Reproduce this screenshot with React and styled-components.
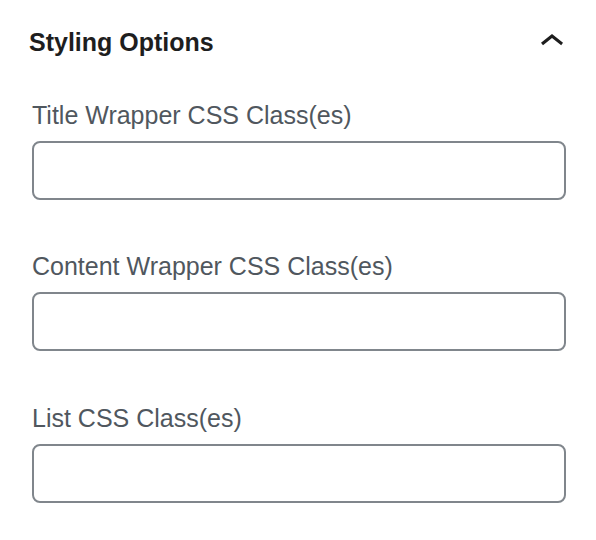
import React from 'react';
import styled, { createGlobalStyle } from 'styled-components';

const GlobalStyle = createGlobalStyle`
    body {
        margin: 0;
        background: #fff;
        font-family: "Liberation Sans", Arial, sans-serif;
    }
`

const Panel = styled.div`
    width: 596px;
    height: 540px;
    padding: 0 30px 0 32px;
    box-sizing: border-box;
    background: #fff;
`

const Header = styled.div`
    height: 84px;
    display: flex;
    align-items: center;
    justify-content: space-between;
    h2 {
        margin: 0 0 0 -3px;
        font-size: 25px;
        line-height: 30px;
        font-weight: 700;
        color: #1e1e1e;
    }
    svg {
        margin-right: -10px;
    }
`

const Field = styled.div`
    margin-top: ${p => p.$gap}px;
    label {
        display: block;
        font-size: 25px;
        line-height: 30px;
        color: #50575e;
        margin-bottom: 11px;
    }
`

const Input = styled.input`
    display: block;
    width: 100%;
    height: 59px;
    box-sizing: border-box;
    border: 2px solid #80868c;
    border-radius: 8px;
    background: #fff;
    outline: none;
    font-size: 25px;
    padding: 0 16px;
`

const fields = [
    { label: 'Title Wrapper CSS Class(es)', gap: 16 },
    { label: 'Content Wrapper CSS Class(es)', gap: 51 },
    { label: 'List CSS Class(es)', gap: 52 },
];

const App = () => {
    return(
        <>
            <GlobalStyle />
            <Panel>
                <Header>
                    <h2>Styling Options</h2>
                    <svg width="48" height="48" viewBox="0 0 24 24" fill="#1e1e1e">
                        <path d="M6.5 12.4L12 8l5.5 4.4-.9 1.2L12 10l-4.5 3.6-1-1.2z" />
                    </svg>
                </Header>
                {fields.map(f => (
                    <Field key={f.label} $gap={f.gap}>
                        <label>{f.label}</label>
                        <Input type="text" />
                    </Field>
                ))}
            </Panel>
        </>
    )
}

export default App
